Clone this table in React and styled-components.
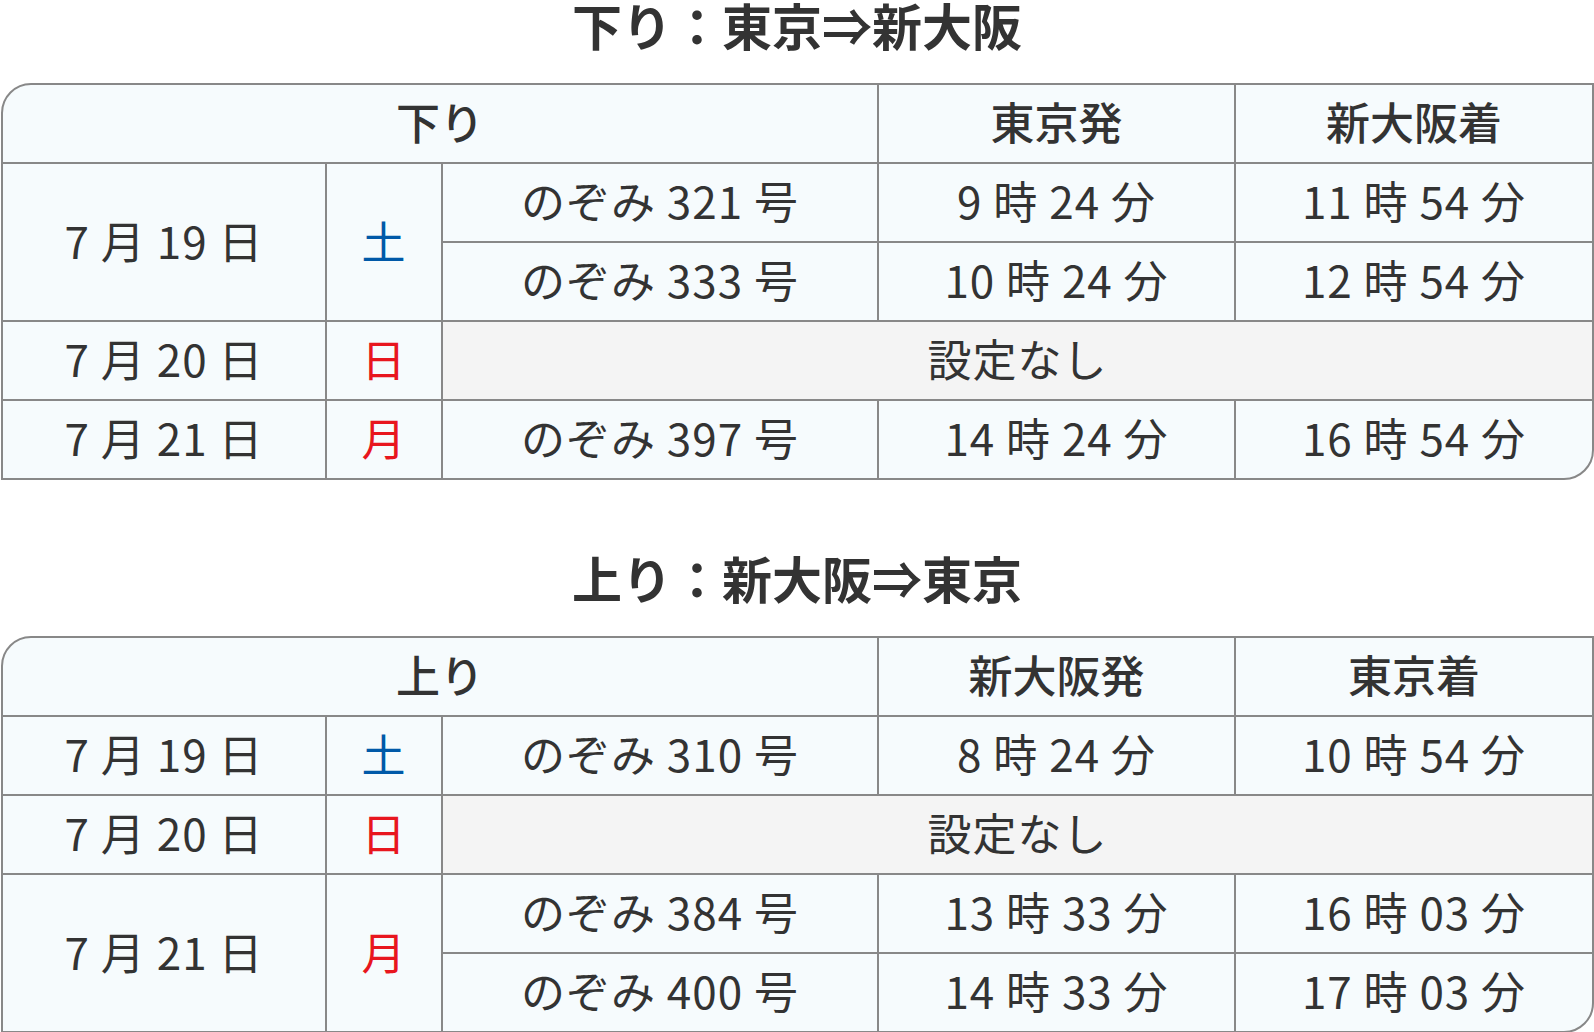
import React from "react";
import styled, { createGlobalStyle } from "styled-components";

const Global = createGlobalStyle`
  html, body { margin: 0; padding: 0; background: #ffffff; }
  body { font-family: "Noto Sans CJK JP", "Noto Sans", sans-serif; color: #333333; }
`;

const Page = styled.div`
  width: 1594px;
  padding: 0 1px;
  box-sizing: border-box;
`;

const Section = styled.section`
  & + & { margin-top: 73px; }
`;

const Title = styled.h2`
  margin: 0 0 29px;
  height: 54px;
  line-height: 48px;
  text-align: center;
  font-size: 50px;
  font-weight: 700;
  color: #333333;
`;

const Table = styled.table`
  width: 100%;
  table-layout: fixed;
  border-collapse: separate;
  border-spacing: 0;
  border: 2px solid #888888;
  border-radius: 30px 0 30px 0;
  overflow: hidden;
  background: #f6fbfd;
`;

const Cell = styled.td`
  height: 72px;
  padding: 0 0 5px;
  box-sizing: content-box;
  text-align: center;
  vertical-align: middle;
  font-size: 44px;
  line-height: 1;
  letter-spacing: ${(p) => (p.$head ? "0" : "1px")};
  font-weight: ${(p) => (p.$head ? 500 : 400)};
  color: ${(p) => p.$color || "#333333"};
  background: ${(p) => (p.$none ? "#f4f4f4" : "transparent")};
  border-right: ${(p) => (p.$last ? "0" : "2px solid #888888")};
  border-bottom: ${(p) => (p.$bottom ? "0" : "2px solid #888888")};
  white-space: nowrap;
`;

const DAY_COLORS = { 土: "#0059a8", 日: "#e8161e", 月: "#e8161e" };

const cols = [324, 116, 436, 357, 356];

function Timetable({ label, from, to, days }) {
  const rows = [];
  days.forEach((d, di) => {
    const lastDay = di === days.length - 1;
    if (!d.trains.length) {
      rows.push(
        <tr key={d.date}>
          <Cell $bottom={lastDay}>{d.date}</Cell>
          <Cell $bottom={lastDay} $color={DAY_COLORS[d.dow]}>{d.dow}</Cell>
          <Cell colSpan={3} $none $last $bottom={lastDay}>設定なし</Cell>
        </tr>
      );
      return;
    }
    d.trains.forEach((t, ti) => {
      const lastRow = lastDay && ti === d.trains.length - 1;
      rows.push(
        <tr key={d.date + t.name}>
          {ti === 0 && (
            <>
              <Cell rowSpan={d.trains.length} $bottom={lastDay}>{d.date}</Cell>
              <Cell rowSpan={d.trains.length} $bottom={lastDay} $color={DAY_COLORS[d.dow]}>
                {d.dow}
              </Cell>
            </>
          )}
          <Cell $bottom={lastRow}>{t.name}</Cell>
          <Cell $bottom={lastRow}>{t.dep}</Cell>
          <Cell $bottom={lastRow} $last>{t.arr}</Cell>
        </tr>
      );
    });
  });
  return (
    <Table>
      <colgroup>
        {cols.map((w, i) => (
          <col key={i} style={{ width: w }} />
        ))}
      </colgroup>
      <thead>
        <tr>
          <Cell as="th" colSpan={3} $head>{label}</Cell>
          <Cell as="th" $head>{from}</Cell>
          <Cell as="th" $head $last>{to}</Cell>
        </tr>
      </thead>
      <tbody>{rows}</tbody>
    </Table>
  );
}

const down = [
  {
    date: "7 月 19 日",
    dow: "土",
    trains: [
      { name: "のぞみ 321 号", dep: "9 時 24 分", arr: "11 時 54 分" },
      { name: "のぞみ 333 号", dep: "10 時 24 分", arr: "12 時 54 分" },
    ],
  },
  { date: "7 月 20 日", dow: "日", trains: [] },
  {
    date: "7 月 21 日",
    dow: "月",
    trains: [{ name: "のぞみ 397 号", dep: "14 時 24 分", arr: "16 時 54 分" }],
  },
];

const up = [
  {
    date: "7 月 19 日",
    dow: "土",
    trains: [{ name: "のぞみ 310 号", dep: "8 時 24 分", arr: "10 時 54 分" }],
  },
  { date: "7 月 20 日", dow: "日", trains: [] },
  {
    date: "7 月 21 日",
    dow: "月",
    trains: [
      { name: "のぞみ 384 号", dep: "13 時 33 分", arr: "16 時 03 分" },
      { name: "のぞみ 400 号", dep: "14 時 33 分", arr: "17 時 03 分" },
    ],
  },
];

export default function App() {
  return (
    <Page>
      <Global />
      <Section>
        <Title>下り：東京⇒新大阪</Title>
        <Timetable label="下り" from="東京発" to="新大阪着" days={down} />
      </Section>
      <Section>
        <Title>上り：新大阪⇒東京</Title>
        <Timetable label="上り" from="新大阪発" to="東京着" days={up} />
      </Section>
    </Page>
  );
}
